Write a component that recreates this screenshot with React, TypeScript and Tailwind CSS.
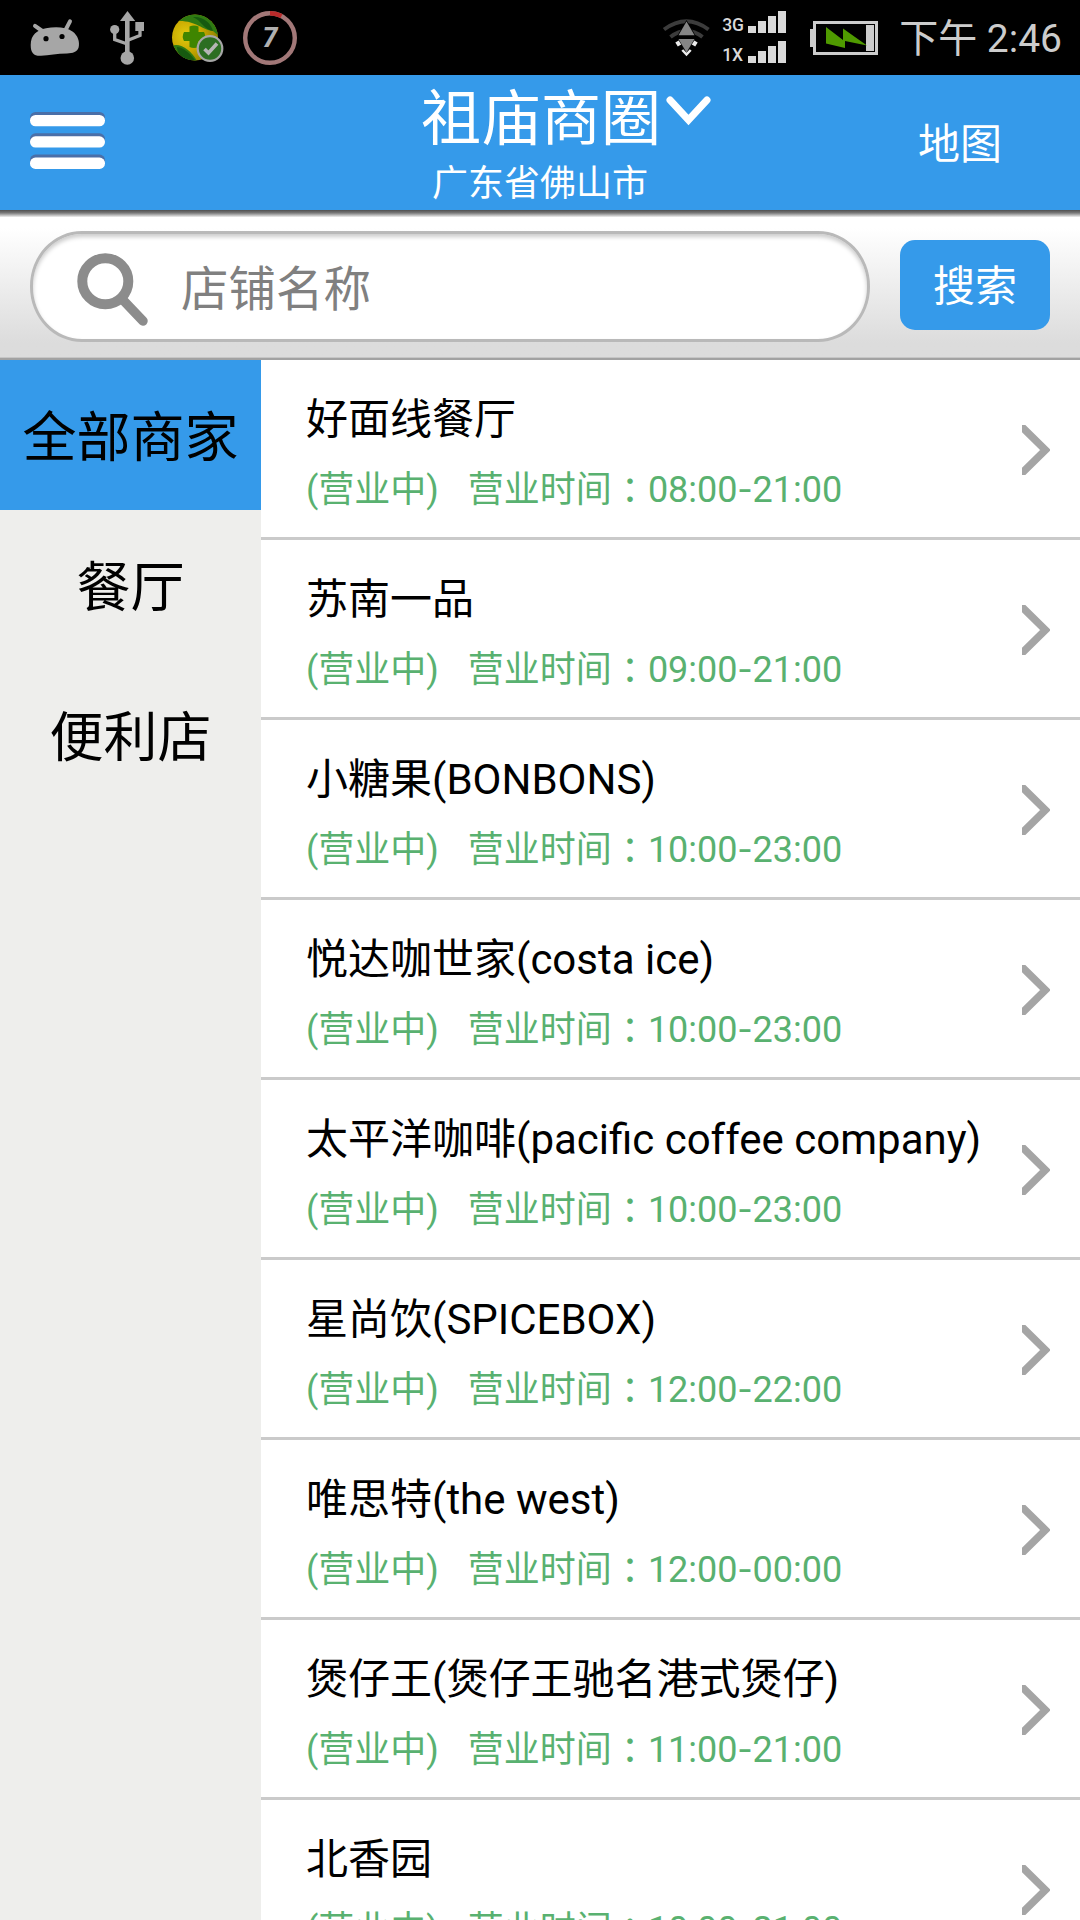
import type { ReactNode } from "react";

type Shop = {
  name: string;
  open: string;
  close: string;
};

const categories = ["全部商家", "餐厅", "便利店"];

const shops: Shop[] = [
  { name: "好面线餐厅", open: "08:00", close: "21:00" },
  { name: "苏南一品", open: "09:00", close: "21:00" },
  { name: "小糖果(BONBONS)", open: "10:00", close: "23:00" },
  { name: "悦达咖世家(costa ice)", open: "10:00", close: "23:00" },
  { name: "太平洋咖啡(pacific coffee company)", open: "10:00", close: "23:00" },
  { name: "星尚饮(SPICEBOX)", open: "12:00", close: "22:00" },
  { name: "唯思特(the west)", open: "12:00", close: "00:00" },
  { name: "煲仔王(煲仔王驰名港式煲仔)", open: "11:00", close: "21:00" },
  { name: "北香园", open: "10:00", close: "21:00" },
];

function AndroidIcon() {
  return (
    <svg width="50" height="40" viewBox="30 17 50 40" fill="none">
      <path
        d="M30.7 44C30.7 34 37 29 46 27.3C55 25.7 66 25.8 72.500 30.500C78 34.500 80 41 78.600 46.500C77.300 51 73 52.300 67 52.400C57 52.600 49 54.200 41 54.800C34 55.200 30.700 52 30.700 44Z"
        fill="#a6a6a6"
      />
      <path d="M35 24.800L43 30.500M70 20.300L65 30" stroke="#a6a6a6" strokeWidth="4" strokeLinecap="round" />
      <circle cx="46" cy="37.700" r="2.600" fill="#000" />
      <circle cx="62" cy="35.500" r="2.600" fill="#000" />
    </svg>
  );
}

function UsbIcon() {
  return (
    <svg width="36" height="56" viewBox="109 10 36 56" fill="none">
      <path d="M127.500 11L135.200 21H120Z" fill="#a6a6a6" />
      <path d="M127.300 20V54" stroke="#a6a6a6" strokeWidth="4.600" />
      <circle cx="127.300" cy="58" r="6.800" fill="#a6a6a6" />
      <circle cx="114.700" cy="29.600" r="4.600" fill="#a6a6a6" />
      <rect x="135.300" y="22" width="8.700" height="9" fill="#a6a6a6" />
      <path d="M114.700 32V39.500L127.300 44M140 30V35.500L127.300 40.500" stroke="#a6a6a6" strokeWidth="3.300" />
    </svg>
  );
}

function GuardIcon() {
  return (
    <svg width="54" height="50" viewBox="171 13 54 50" fill="none">
      <defs>
        <radialGradient id="ball" cx="0.3" cy="0.45" r="0.7">
          <stop offset="0" stopColor="#e0cc10" />
          <stop offset="0.5" stopColor="#c9a800" />
          <stop offset="1" stopColor="#8f8200" />
        </radialGradient>
        <clipPath id="ballClip">
          <circle cx="195" cy="37.500" r="23" />
        </clipPath>
      </defs>
      <circle cx="195" cy="37.500" r="23" fill="url(#ball)" />
      <g clipPath="url(#ballClip)">
        <path d="M177 21C187 10 213 10 219 36L213 31C202 30 196 20 177 21Z" fill="#2f7a12" />
        <path d="M193 17C203 16 211 23 213 31C203 29 202 21 193 17Z" fill="#175a10" />
        <path d="M171 46C180 42 191 50 197 61H180Z" fill="#2f7a12" />
        <path d="M177 47C185 48 190 54 195 60H186C180 57 177 52 177 47Z" fill="#175a10" />
      </g>
      <path
        d="M189.500 26.500Q194 24.500 198.500 26.500V32H204Q206.500 36.500 204 41H198.500V47Q194 49 189.500 47V41H184Q181.500 36.500 184 32H189.500Z"
        fill="#3f8500"
      />
      <circle cx="210" cy="48.500" r="12.300" fill="#2c6e22" stroke="#a6a6a6" strokeWidth="2.200" />
      <path d="M204.500 49L208.500 53L217 43.500" stroke="#b5b5b5" strokeWidth="3.600" />
    </svg>
  );
}

function CounterIcon() {
  return (
    <svg width="54" height="54" viewBox="243 11 54 54" fill="none">
      <circle cx="270" cy="38" r="24.800" stroke="#a27878" strokeWidth="4.400" />
      <path d="M270 13.200A24.800 24.800 0 0 1 281.500 16" stroke="#b92a2a" strokeWidth="4.400" />
      <text
        x="270"
        y="47.300"
        textAnchor="middle"
        fill="#b0b0b0"
        className="font-['Roboto'] text-[27px] font-extrabold italic"
      >
        7
      </text>
    </svg>
  );
}

function WifiIcon() {
  return (
    <svg width="48" height="40" viewBox="662 18 48 40" fill="none">
      <path d="M664 29.500Q686.500 13 708.500 29.500" stroke="#3c3c3c" strokeWidth="4" />
      <path d="M670.500 37Q686.500 24.500 702.500 37" stroke="#3c3c3c" strokeWidth="4" />
      <path d="M686.500 21.500L694.500 35.200H678.500Z" fill="#858585" stroke="#000" strokeWidth="1.500" paintOrder="stroke" />
      <path d="M678.500 39H694.500L686.500 52.500Z" fill="#858585" />
      <path d="M677 41.500L679.500 45.500M696 41.500L693.500 45.500" stroke="#ececec" strokeWidth="4" />
      <path d="M682.300 50L686.500 54.500L690.700 50" stroke="#ececec" strokeWidth="2.500" />
    </svg>
  );
}

function Signal({ label }: { label: string }) {
  return (
    <div className="flex h-[22px] items-end justify-between">
      <span className="text-[17.5px] leading-[16px] font-medium text-[#d9d9d9]">{label}</span>
      <div className="flex items-end gap-[2px]">
        <i className="h-[7px] w-2 bg-[#d9d9d9]" />
        <i className="h-3 w-2 bg-[#d9d9d9]" />
        <i className="h-[17px] w-2 bg-[#d9d9d9]" />
        <i className="h-[22px] w-2 bg-[#d9d9d9]" />
      </div>
    </div>
  );
}

function BatteryIcon() {
  return (
    <svg width="68" height="34" viewBox="810 21 68 34" fill="none">
      <rect x="814.500" y="22.500" width="62" height="31" stroke="#ccc" strokeWidth="3" />
      <rect x="810" y="29" width="4" height="18" fill="#ccc" />
      <rect x="866" y="25" width="8" height="26" fill="#ccc" />
      <path d="M826 27L843 40V28.500L867 45.500L845 41V48L826 43.500Z" fill="#4f9a00" />
    </svg>
  );
}

function StatusBar() {
  return (
    <div className="flex h-[75px] items-center bg-black pt-px pr-[18px] pl-[30px] text-[#ccc]">
      <AndroidIcon />
      <div className="ml-[29px]">
        <UsbIcon />
      </div>
      <div className="ml-[26px]">
        <GuardIcon />
      </div>
      <div className="ml-[18px]">
        <CounterIcon />
      </div>
      <div className="ml-auto">
        <WifiIcon />
      </div>
      <div className="ml-3 flex w-16 flex-col gap-2 pb-0.5">
        <Signal label="3G" />
        <Signal label="1X" />
      </div>
      <div className="ml-6">
        <BatteryIcon />
      </div>
      <span className="ml-[21px] pt-0.5 text-[39px] leading-[60px] whitespace-nowrap">下午 2:46</span>
    </div>
  );
}

function MenuIcon() {
  return (
    <svg width="75" height="58" viewBox="0 0 75 58">
      {[0, 21.300, 42.600].map((y) => (
        <g key={y}>
          <rect x="0" y={y} width="75" height="12" rx="5.500" fill="#4a6fa8" />
          <rect x="0" y={y + 3} width="75" height="11.300" rx="5.500" fill="#fff" />
        </g>
      ))}
    </svg>
  );
}

function Header() {
  return (
    <header className="flex h-[135px] bg-[#359aea] text-white">
      <div className="w-[330px] pt-[37px] pl-[30px]">
        <MenuIcon />
      </div>
      <div className="w-[420px]">
        <div className="flex h-[87px] pl-[91px]">
          <h1 className="shrink-0 text-[60px] leading-[90px]">祖庙商圈</h1>
          <svg className="mt-5 ml-[5px] shrink-0" width="45" height="34" viewBox="0 0 45 34" fill="none">
            <path d="M4 5L22.500 25L41 5" stroke="#fff" strokeWidth="7" strokeLinecap="round" />
          </svg>
        </div>
        <p className="text-center text-[36px] leading-[44px]">广东省佛山市</p>
      </div>
      <div className="w-[330px] pt-[37px] pl-[168px] text-[42px] leading-[65px]">地图</div>
    </header>
  );
}

function SearchBar() {
  return (
    <div className="flex h-[150px] flex-col">
      <div className="h-[7px] bg-linear-to-b from-[#505050] via-[#777] via-40% to-[#f0f0f0]" />
      <div className="flex h-[140px] bg-linear-to-b from-white from-8% to-[#dcdcdc] to-90% pl-[30px]">
        <div className="mt-[14px] flex h-[111px] w-[840px] rounded-[52px/55px] border-[3px] border-[#b9b9b9] bg-white pl-[44px] shadow-[inset_0_3px_4px_#ccc]">
          <svg className="mt-[18px]" width="74" height="76" viewBox="77 252 74 76" fill="none">
            <circle cx="105.300" cy="281.300" r="23" stroke="#8c8c8c" strokeWidth="10" />
            <path d="M123 300L143 321" stroke="#8c8c8c" strokeWidth="9.500" strokeLinecap="round" />
          </svg>
          <span className="pl-[30px] text-[47.5px] leading-[112px] text-[#808080]">店铺名称</span>
        </div>
        <button className="mt-[23px] ml-[30px] h-[90px] w-[150px] rounded-[15px] bg-[#359aea] pt-0.5 text-[42px] text-white">
          搜索
        </button>
      </div>
      <div className="h-[3px] border-b-2 border-[#a2a2a2] bg-[#c6c6c6]" />
    </div>
  );
}

function Sidebar({ children }: { children: ReactNode }) {
  return <nav className="w-[261px] shrink-0 bg-[#eeeeec]">{children}</nav>;
}

function ShopRow({ shop }: { shop: Shop }) {
  return (
    <li className="flex h-[180px] shrink-0 items-center justify-between border-b-[3px] border-[#cacaca] pr-[30px] pl-[45px]">
      <div className="pt-[3px] whitespace-nowrap">
        <p className="text-[42px] leading-[60px] text-black">{shop.name}</p>
        <p className="flex pt-[19px] text-[36px] leading-[42px] text-[#59b170]">
          <span>(营业中)</span>
          <span className="ml-[29px]">营业时间</span>
          {/* half-width form of the full-width colon, padded back to one em */}
          <span className="w-9 pl-[9px] [font-feature-settings:'halt']">：</span>
          <span>{shop.open}</span>
          <span className="mx-[2.5px] scale-x-125">-</span>
          <span>{shop.close}</span>
        </p>
      </div>
      <svg className="mt-[3px] shrink-0" width="28" height="50" viewBox="0 0 28 50" fill="none">
        <path d="M-1 1L23.500 25L-1 49" stroke="#a5a5a5" strokeWidth="7.500" />
      </svg>
    </li>
  );
}

export default function App() {
  return (
    <div className="flex h-[1920px] w-[1080px] flex-col overflow-hidden bg-white font-['Roboto','Noto_Sans_CJK_SC',sans-serif]">
      <StatusBar />
      <Header />
      <SearchBar />
      <div className="flex min-h-0 flex-1">
        <Sidebar>
          {categories.map((item, i) => (
            <div
              key={item}
              className={`h-[150px] text-center text-[54px] leading-[158px] text-black ${i === 0 ? "bg-[#359aea]" : ""}`}
            >
              {item}
            </div>
          ))}
        </Sidebar>
        <ul className="flex flex-1 flex-col overflow-hidden bg-white">
          {shops.map((shop) => (
            <ShopRow key={shop.name} shop={shop} />
          ))}
        </ul>
      </div>
    </div>
  );
}
